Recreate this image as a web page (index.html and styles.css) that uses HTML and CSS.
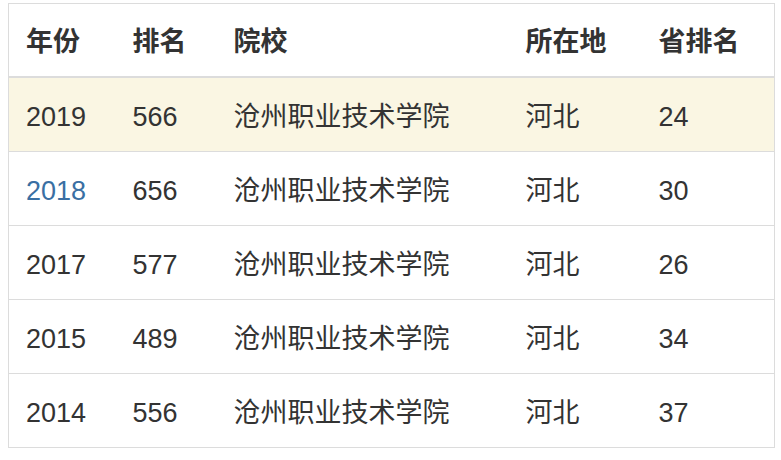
FILE: index.html
```html
<!DOCTYPE html>
<html lang="zh-CN">
<head>
<meta charset="utf-8">
<title>排名</title>
<link rel="stylesheet" href="styles.css">
</head>
<body>
<div class="wrap">
<table class="rank">
  <colgroup>
    <col class="c-year"><col class="c-rank"><col class="c-school"><col class="c-loc"><col class="c-prov">
  </colgroup>
  <thead>
    <tr><th>年份</th><th>排名</th><th>院校</th><th>所在地</th><th>省排名</th></tr>
  </thead>
  <tbody>
    <tr class="hl"><td>2019</td><td>566</td><td>沧州职业技术学院</td><td>河北</td><td>24</td></tr>
    <tr><td class="link">2018</td><td>656</td><td>沧州职业技术学院</td><td>河北</td><td>30</td></tr>
    <tr><td>2017</td><td>577</td><td>沧州职业技术学院</td><td>河北</td><td>26</td></tr>
    <tr><td>2015</td><td>489</td><td>沧州职业技术学院</td><td>河北</td><td>34</td></tr>
    <tr><td>2014</td><td>556</td><td>沧州职业技术学院</td><td>河北</td><td>37</td></tr>
  </tbody>
</table>
</div>
</body>
</html>
```
FILE: styles.css
```css
html, body {
  margin: 0;
  padding: 0;
  background: #ffffff;
}
body {
  font-family: "Liberation Sans", "Noto Sans CJK SC", sans-serif;
  color: #333333;
}
.wrap {
  padding: 3px 0 0 8px;
}
.rank {
  width: 766px;
  border-collapse: collapse;
  table-layout: fixed;
  border: 1px solid #dcdcdc;
  font-size: 27px;
  line-height: 32px;
}
.c-year { width: 107px; }
.c-rank { width: 101px; }
.c-school { width: 292px; }
.c-loc { width: 133px; }
.c-prov { width: 133px; }
.rank th, .rank td {
  text-align: left;
  padding: 4px 0 0 17px;
  vertical-align: middle;
  white-space: nowrap;
}
.rank th {
  height: 68px;
  font-weight: bold;
  color: #333333;
  border-bottom: 2px solid #dcdcdc;
}
.rank td {
  height: 69px;
  border-top: 1px solid #dcdcdc;
  color: #333333;
}
.rank tr.hl td {
  background: #faf6e3;
}
.rank td.link {
  color: #3a6fa3;
}
```
